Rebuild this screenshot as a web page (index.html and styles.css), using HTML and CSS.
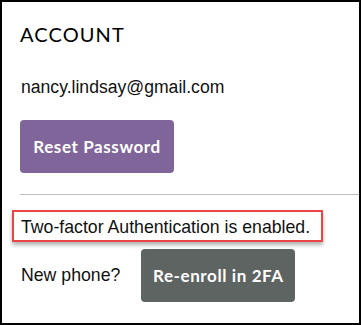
FILE: index.html
```html
<!DOCTYPE html>
<html>
<head>
<meta charset="utf-8">
<link rel="stylesheet" href="styles.css">
</head>
<body>
<div class="frame">
  <section class="account">
    <h1 class="title">ACCOUNT</h1>
    <p class="email">nancy.lindsay@gmail.com</p>
    <button class="btn btn-purple">Reset Password</button>
  </section>
  <hr class="divider">
  <section class="twofa">
    <p class="status">Two-factor Authentication is enabled.<span class="highlight"></span></p>
    <div class="row">
      <span class="label">New phone?</span>
      <button class="btn btn-gray">Re-enroll in 2FA</button>
    </div>
  </section>
</div>
</body>
</html>
```
FILE: styles.css
```css
html, body {
  margin: 0;
  padding: 0;
  background: #fff;
}
.frame {
  width: 361px;
  height: 325px;
  box-sizing: border-box;
  border: 2px solid #000;
  background: #fff;
  padding-top: 20px;
  font-family: "Liberation Sans", Arial, sans-serif;
  color: #111;
  overflow: hidden;
}
.account, .twofa {
  padding-left: 18px;
}
.title {
  margin: 0;
  font-family: Lato, "Open Sans", sans-serif;
  font-weight: 400;
  font-size: 20px;
  line-height: 24px;
  letter-spacing: 1.1px;
  color: #000;
}
.email {
  margin: 30px 0 0 1px;
  font-size: 17.6px;
  line-height: 22px;
}
.btn {
  display: inline-flex;
  align-items: center;
  justify-content: center;
  width: 154px;
  height: 53px;
  border: none;
  border-radius: 4px;
  color: #fff;
  font-family: Lato, sans-serif;
  font-weight: 700;
  font-size: 17px;
  letter-spacing: 0.6px;
  padding: 0;
}
.btn-purple {
  background: #80659b;
  margin-top: 22px;
}
.btn-gray {
  background: #5e6462;
}
.divider {
  margin: 21px 0 0 18px;
  border: none;
  border-top: 1px solid #bdbdbd;
  height: 0;
}
.status {
  position: relative;
  margin: 21px 0 0 1px;
  font-size: 17.7px;
  line-height: 22px;
  display: inline-block;
}
.highlight {
  position: absolute;
  left: -9px;
  top: -6px;
  width: 311px;
  height: 32px;
  box-sizing: border-box;
  border: 2px solid #ea4444;
  box-shadow: 0 3px 4px rgba(0, 0, 0, 0.3);
}
.row {
  display: flex;
  align-items: center;
  gap: 21px;
  margin-top: 11px;
  margin-left: 1px;
}
.label {
  font-size: 17.7px;
}
```
